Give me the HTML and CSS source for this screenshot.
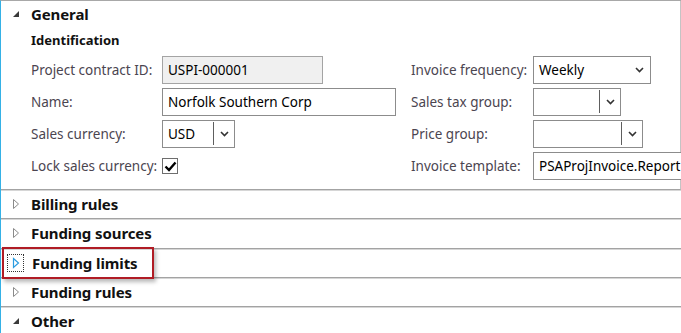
FILE: index.html
```html
<!DOCTYPE html>
<html>
<head>
<meta charset="utf-8">
<link rel="stylesheet" href="styles.css">
</head>
<body>
<div class="panel">
  <section class="sec general">
    <div class="sec-head">
      <svg class="tri" width="8" height="8" viewBox="0 0 8 8"><polygon points="7,1 7,7 1,7" fill="#3a3a3a"/></svg>
      <span class="title">General</span>
    </div>
    <div class="group-title">Identification</div>
    <div class="form">
      <div class="col col-left">
        <div class="row"><span class="label">Project contract ID:</span><div class="field ro w-pid">USPI-000001</div></div>
        <div class="row"><span class="label">Name:</span><div class="field w-name">Norfolk Southern Corp</div></div>
        <div class="row"><span class="label">Sales currency:</span><div class="field combo w-cur"><span class="val">USD</span><span class="sep"></span><span class="chev"><svg width="9" height="6" viewBox="0 0 9 6"><polyline points="1,1 4.5,4.5 8,1" fill="none" stroke="#333" stroke-width="1.6"/></svg></span></div></div>
        <div class="row"><span class="label">Lock sales currency:</span><div class="check"><svg width="13" height="11" viewBox="0 0 13 11"><polyline points="1.5,5.5 5,9 11.5,1.5" fill="none" stroke="#000" stroke-width="2.4"/></svg></div></div>
      </div>
      <div class="col col-right">
        <div class="row"><span class="label">Invoice frequency:</span><div class="field combo w-freq"><span class="val">Weekly</span><span class="chev"><svg width="9" height="6" viewBox="0 0 9 6"><polyline points="1,1 4.5,4.5 8,1" fill="none" stroke="#333" stroke-width="1.6"/></svg></span></div></div>
        <div class="row"><span class="label">Sales tax group:</span><div class="field combo w-tax"><span class="val"></span><span class="sep"></span><span class="chev"><svg width="9" height="6" viewBox="0 0 9 6"><polyline points="1,1 4.5,4.5 8,1" fill="none" stroke="#333" stroke-width="1.6"/></svg></span></div></div>
        <div class="row"><span class="label">Price group:</span><div class="field combo w-price"><span class="val"></span><span class="sep"></span><span class="chev"><svg width="9" height="6" viewBox="0 0 9 6"><polyline points="1,1 4.5,4.5 8,1" fill="none" stroke="#333" stroke-width="1.6"/></svg></span></div></div>
        <div class="row"><span class="label">Invoice template:</span><div class="field w-tpl">PSAProjInvoice.Report</div></div>
      </div>
    </div>
  </section>
  <section class="sec collapsed">
    <div class="sec-head">
      <svg class="tri" width="8" height="12" viewBox="0 0 8 12"><polygon points="1.5,1.5 6.5,6 1.5,10.5" fill="#fff" stroke="#8a8a8a" stroke-width="1"/></svg>
      <span class="title">Billing rules</span>
    </div>
  </section>
  <section class="sec collapsed tall">
    <div class="sec-head">
      <svg class="tri" width="8" height="12" viewBox="0 0 8 12"><polygon points="1.5,1.5 6.5,6 1.5,10.5" fill="#fff" stroke="#8a8a8a" stroke-width="1"/></svg>
      <span class="title">Funding sources</span>
    </div>
  </section>
  <section class="sec collapsed focus">
    <div class="sec-head">
      <span class="focus-rect"><svg width="8" height="12" viewBox="0 0 8 12"><polygon points="1.5,1.5 6.5,6 1.5,10.5" fill="#fff" stroke="#2a9be0" stroke-width="1.2"/></svg></span>
      <span class="title">Funding limits</span>
    </div>
    <div class="highlight"></div>
  </section>
  <section class="sec collapsed">
    <div class="sec-head">
      <svg class="tri" width="8" height="12" viewBox="0 0 8 12"><polygon points="1.5,1.5 6.5,6 1.5,10.5" fill="#fff" stroke="#8a8a8a" stroke-width="1"/></svg>
      <span class="title">Funding rules</span>
    </div>
  </section>
  <section class="sec last">
    <div class="sec-head">
      <svg class="tri" width="8" height="8" viewBox="0 0 8 8"><polygon points="7,1 7,7 1,7" fill="#3a3a3a"/></svg>
      <span class="title">Other</span>
    </div>
  </section>
</div>
</body>
</html>
```

FILE: styles.css
```css
* { box-sizing: border-box; }
html, body { margin: 0; padding: 0; background: #fff; }
body {
  font-family: "Noto Sans", "Open Sans", sans-serif;
  font-size: 13.5px;
  color: #000;
  width: 681px;
  height: 333px;
  overflow: hidden;
}
.panel {
  border-left: 1px solid #35b1e6;
  height: 333px;
  border-top: 1px solid #a8a8a8;
}
.sec {
  border-bottom: 1px solid #a3a3a3;
  box-shadow: 0 1px 0 #d6d6d6;
  margin-bottom: 1px;
  position: relative;
}
.sec.last { border-bottom: none; box-shadow: none; }
.general {
  padding-bottom: 9px;
  border-right: 1px solid #c4c4c4;
}
.sec-head {
  height: 27px;
  display: flex;
  align-items: center;
  padding-left: 11px;
  padding-bottom: 2px;
}
.tall .sec-head { height: 28px; }
.general .sec-head { height: 28px; }
.tri { flex: none; width: 8px; margin-right: 11px; }
.title {
  font-weight: 700;
  font-size: 15px;
  color: #111;
  letter-spacing: -0.1px;
}
.group-title {
  height: 23px;
  line-height: 23px;
  padding-left: 30px;
  font-weight: 700;
  font-size: 13px;
  color: #111;
}
.form {
  margin-top: 4px;
  display: grid;
  grid-template-columns: 380px 1fr;
  padding-left: 30px;
}
.col { display: flex; flex-direction: column; gap: 4px; }
.row { display: flex; align-items: center; height: 28px; }
.col-left .label { width: 131px; }
.col-right .label { width: 122px; }
.label { color: #4b4550; flex: none; white-space: nowrap; }
.field {
  height: 28px;
  border: 1px solid #8c8c8c;
  background: #fff;
  padding: 0 5px;
  display: flex;
  align-items: center;
  white-space: nowrap;
  overflow: hidden;
  flex: none;
  font-size: 13.5px;
}
.field.ro { background: #f0f0f0; border-color: #a4a4a4; }
.w-pid { width: 161px; }
.w-name { width: 234px; }
.w-cur { width: 73px; }
.w-freq { width: 118px; }
.w-tax { width: 88px; }
.w-price { width: 110px; }
.w-tpl { width: 160px; border-right: none; }
.combo { padding-right: 0; }
.combo .val { flex: 1; }
.sep { width: 1px; height: 23px; background: #5e5e5e; align-self: flex-start; margin-top: 1px; }
.chev { width: 20px; display: flex; justify-content: center; align-items: center; }
.w-freq .chev { width: 22px; }
.check {
  width: 16px;
  height: 16px;
  border: 1px solid #6e6e6e;
  display: flex;
  align-items: center;
  justify-content: center;
  background: #fff;
}
.focus-rect {
  flex: none;
  width: 17px;
  height: 18px;
  border: 1px dotted #333;
  display: flex;
  align-items: center;
  justify-content: center;
  margin-left: -5px;
  margin-right: 8px;
}
.highlight {
  position: absolute;
  left: 1px;
  top: -3px;
  width: 152px;
  height: 32px;
  border: 2px solid #b01c25;
  box-shadow: 2px 3px 4px rgba(0,0,0,0.28);
  pointer-events: none;
}
```
